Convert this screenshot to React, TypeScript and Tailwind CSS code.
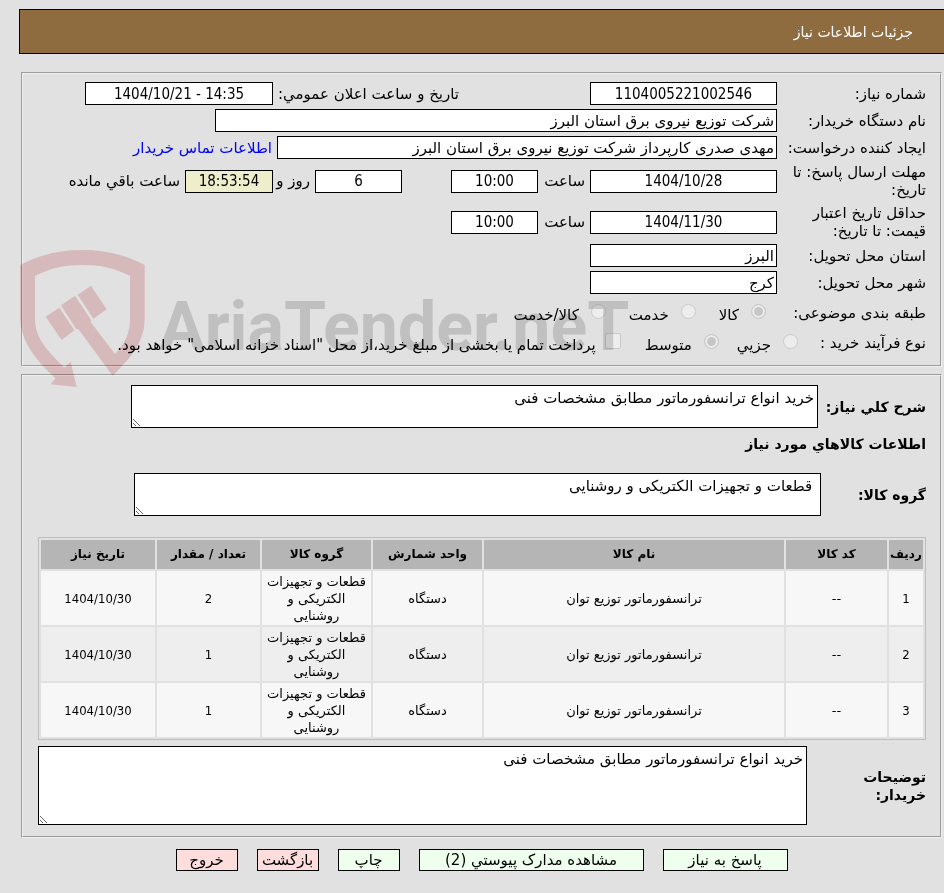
import type { ReactNode } from "react";

const items = [
  { row: 1, qty: 2 },
  { row: 2, qty: 1 },
  { row: 3, qty: 1 },
];

type FieldProps = {
  id: string;
  value: string;
  width: string;
  label?: string;
  numeric?: boolean;
  tone?: string;
};

function Field({ id, value, width, label, numeric = false, tone = "bg-white" }: FieldProps) {
  const font = numeric
    ? "text-center font-['DejaVu_Sans_Condensed','DejaVu_Sans',sans-serif]"
    : "text-right";
  return (
    <input
      id={id}
      aria-label={label}
      readOnly
      dir={numeric ? "ltr" : "rtl"}
      value={value}
      className={`h-[23px] shrink-0 border border-black px-[2px] text-[15px] leading-[18px] outline-none ${tone} ${width} ${font}`}
    />
  );
}

function Row({ id, label, children }: { id?: string; label: string; children: ReactNode }) {
  return (
    <div className="flex items-center">
      <label htmlFor={id} className="w-[149px] shrink-0 pe-[8px] leading-[18px]">
        {label}
      </label>
      {children}
    </div>
  );
}

function Choice({ id, name, text, checked = false }: { id: string; name: string; text: string; checked?: boolean }) {
  return (
    <div className="flex items-center gap-[12px]">
      <input
        id={id}
        type="radio"
        name={name}
        disabled
        defaultChecked={checked}
        className="mb-1 size-[15px] shrink-0 appearance-none rounded-full border border-[#cacaca] bg-[#ededed] checked:bg-[#c6c6c6] checked:shadow-[inset_0_0_0_2px_#ededed]"
      />
      <label htmlFor={id} className="mt-[3px]">{text}</label>
    </div>
  );
}

function Watermark() {
  return (
    <div
      dir="ltr"
      aria-hidden="true"
      className="pointer-events-none absolute left-[-3px] top-[175px] flex mix-blend-multiply"
    >
      <svg viewBox="60 57 378 417" className="h-[139px] w-[126px] shrink-0" fill="#f3d2d3">
        <path
          fillRule="evenodd"
          d="M61 105C120 74 180 60 247 60S375 74 434 105V265C434 330 400 378 338 437L235 297 229 298 183 226 225 197 273 270 272 276 345 372C376 340 390 310 390 265V138C345 114 300 105 247 105S150 114 105 138V265C105 325 140 360 193 413L212 395 230 471 152 463 167 445C105 390 61 330 61 265Z"
        />
        <path d="M137 260 178 233 223 301 185 330ZM233 194 273 167 320 238 280 266Z" />
      </svg>
      <span className="ms-[13px] mt-[32px] whitespace-nowrap font-[Roboto,'Liberation_Sans',sans-serif] text-[68px] font-bold leading-[92px] text-[#dadada]">
        AriaTender.neT
      </span>
    </div>
  );
}

const panel = "border-2 border-[#f0f0f0] [border-style:groove] ps-[14px] pe-[15px]";
const area = "block border border-black bg-white px-[3px] py-[3px] text-[15px] leading-[18px] outline-none [resize:both]";
const head = "bg-[#b5b5b5] h-[29px] p-0 text-[12px] font-bold leading-[17px]";
const cell = "h-[54px] px-[2px] py-px";
const digits = "font-['DejaVu_Sans_Condensed','DejaVu_Sans',sans-serif]";
const button = "h-[22px] cursor-pointer border border-black text-center text-[15px] leading-[18px]";

export default function App() {
  return (
    <div
      dir="rtl"
      className="min-h-screen bg-[#e1e1e1] pt-[9px] pb-[23px] font-['DejaVu_Sans',sans-serif] text-[15px] leading-[18px] text-black"
    >
      <header className="me-[19px] flex h-[45px] items-center border-y border-l border-black bg-[#8f6c40] ps-[31px]">
        <h1 className="text-[14px] text-white">جزئیات اطلاعات نیاز</h1>
      </header>

      <main className="ms-[2px] me-[21px] mt-[18px]">
        <section className={`relative flex flex-col gap-[4px] pt-[8px] pb-[7px] ${panel}`}>
          <Row id="need-no" label="شماره نیاز:">
            <Field id="need-no" numeric value="1104005221002546" width="w-[187px]" />
            <label htmlFor="announce" className="ms-[131px] w-[186px] shrink-0">
              تاریخ و ساعت اعلان عمومي:
            </label>
            <Field id="announce" numeric value="1404/10/21 - 14:35" width="w-[188px]" />
          </Row>
          <Row id="buyer" label="نام دستگاه خریدار:">
            <Field id="buyer" value="شرکت توزیع نیروی برق استان البرز" width="w-[562px]" />
          </Row>
          <Row id="creator" label="ایجاد کننده درخواست:">
            <Field
              id="creator"
              value="مهدی صدری کارپرداز شرکت توزیع نیروی برق استان البرز"
              width="w-[500px]"
            />
            <a href="#contact" className="ms-[5px] whitespace-nowrap text-[#0000ff]">
              اطلاعات تماس خریدار
            </a>
          </Row>
          <Row id="deadline" label="مهلت ارسال پاسخ: تا تاریخ:">
            <Field id="deadline" numeric value="1404/10/28" width="w-[187px]" />
            <label htmlFor="deadline-time" className="ms-[5px] w-[47px] shrink-0">ساعت</label>
            <Field id="deadline-time" numeric value="10:00" width="w-[87px]" />
            <Field id="days" label="روز" numeric value="6" width="mr-[49px] w-[87px]" />
            <label htmlFor="left" className="ms-[5px] w-[37px] shrink-0 whitespace-nowrap">روز و</label>
            <Field id="left" numeric value="18:53:54" tone="bg-[#eeeecc]" width="w-[88px]" />
            <span className="ms-[5px] whitespace-nowrap">ساعت باقي مانده</span>
          </Row>
          <div className="pt-px">
            <Row id="validity" label="حداقل تاریخ اعتبار قیمت: تا تاریخ:">
              <Field id="validity" numeric value="1404/11/30" width="w-[187px]" />
              <label htmlFor="validity-time" className="ms-[5px] w-[47px] shrink-0">ساعت</label>
              <Field id="validity-time" numeric value="10:00" width="w-[87px]" />
            </Row>
          </div>
          <Row id="province" label="استان محل تحویل:">
            <Field id="province" value="البرز" width="w-[187px]" />
          </Row>
          <Row id="city" label="شهر محل تحویل:">
            <Field id="city" value="کرج" width="w-[187px]" />
          </Row>
          <div>
            <div className="flex h-[30px] items-center gap-[23px]">
              <span className="w-[137px] shrink-0 whitespace-nowrap">طبقه بندی موضوعی:</span>
              <Choice id="c1" name="category" text="کالا" checked />
              <Choice id="c2" name="category" text="خدمت" />
              <Choice id="c3" name="category" text="کالا/خدمت" />
            </div>
            <div className="flex h-[30px] items-center gap-[18px]">
              <span className="w-[110px] shrink-0 whitespace-nowrap">نوع فرآیند خرید :</span>
              <Choice id="p1" name="process" text="جزیي" />
              <Choice id="p2" name="process" text="متوسط" checked />
              <div className="ms-[6px] flex items-center gap-[9px]">
                <input
                  id="treasury"
                  type="checkbox"
                  disabled
                  className="mb-1 size-[16px] shrink-0 appearance-none rounded-[2px] border border-[#cacaca] bg-[#ededed]"
                />
                <label htmlFor="treasury" className="mt-[3px] whitespace-nowrap">
                  پرداخت تمام یا بخشی از مبلغ خرید،از محل "اسناد خزانه اسلامی" خواهد بود.
                </label>
              </div>
            </div>
          </div>
          <Watermark />
        </section>

        <section className={`mt-[7px] pt-[9px] pb-[11px] ${panel}`}>
          <div className="flex items-center">
            <label htmlFor="summary" className="w-[108px] shrink-0 whitespace-nowrap text-[14px] font-bold">
              شرح کلي نیاز:
            </label>
            <textarea
              id="summary"
              readOnly
              defaultValue="خرید انواع ترانسفورماتور مطابق مشخصات فنی"
              className={`me-[93px] h-[43px] min-w-0 flex-1 ${area}`}
            />
          </div>
          <h2 className="mt-[7px] text-[14px] font-bold">اطلاعات کالاهاي مورد نیاز</h2>
          <div className="mt-[20px] flex items-center">
            <label htmlFor="group" className="w-[105px] shrink-0 whitespace-nowrap text-[14px] font-bold">
              گروه کالا:
            </label>
            <textarea
              id="group"
              readOnly
              defaultValue=" قطعات و تجهیزات الکتریکی و روشنایی"
              className={`me-[96px] h-[43px] min-w-0 flex-1 ${area}`}
            />
          </div>

          <table className="mt-[21px] w-full table-fixed border-separate border-spacing-[2px] border border-[#bebebe] text-center text-[13px] leading-[17px]">
            <thead>
              <tr>
                <th className={`w-[34px] ${head}`}>ردیف</th>
                <th className={`w-[101px] ${head}`}>کد کالا</th>
                <th className={head}>نام کالا</th>
                <th className={`w-[109px] ${head}`}>واحد شمارش</th>
                <th className={`w-[109px] ${head}`}>گروه کالا</th>
                <th className={`w-[103px] ${head}`}>تعداد / مقدار</th>
                <th className={`w-[114px] ${head}`}>تاریخ نیاز</th>
              </tr>
            </thead>
            <tbody>
              {items.map((item) => (
                <tr key={item.row} className="bg-[#f7f7f7] even:bg-[#eeeeee]">
                  <td className={`${cell} ${digits}`}>{item.row}</td>
                  <td className={cell}>--</td>
                  <td className={cell}>ترانسفورماتور توزیع توان</td>
                  <td className={cell}>دستگاه</td>
                  <td className={cell}>قطعات و تجهیزات الکتریکی و روشنایی</td>
                  <td className={`${cell} ${digits}`}>{item.qty}</td>
                  <td className={`${cell} ${digits}`} dir="ltr">1404/10/30</td>
                </tr>
              ))}
            </tbody>
          </table>

          <div className="mt-[6px] flex items-center">
            <label htmlFor="notes" className="w-[119px] shrink-0 pe-[40px] text-[14px] font-bold">
              توضیحات خریدار:
            </label>
            <textarea
              id="notes"
              readOnly
              defaultValue="خرید انواع ترانسفورماتور مطابق مشخصات فنی"
              className={`h-[79px] min-w-0 flex-1 ${area}`}
            />
          </div>
        </section>

        <div className="mt-[11px] flex justify-center gap-[19px]">
          <button type="button" className={`w-[125px] bg-[#eeffee] ${button}`}>پاسخ به نیاز</button>
          <button type="button" className={`w-[225px] bg-[#eeffee] ${button}`}>
            مشاهده مدارک پیوستي (2)
          </button>
          <button type="button" className={`w-[62px] bg-[#eeffee] ${button}`}>چاپ</button>
          <button type="button" className={`w-[62px] bg-[#ffdddd] ${button}`}>بازگشت</button>
          <button type="button" className={`w-[62px] bg-[#ffdddd] ${button}`}>خروج</button>
        </div>
      </main>
    </div>
  );
}
